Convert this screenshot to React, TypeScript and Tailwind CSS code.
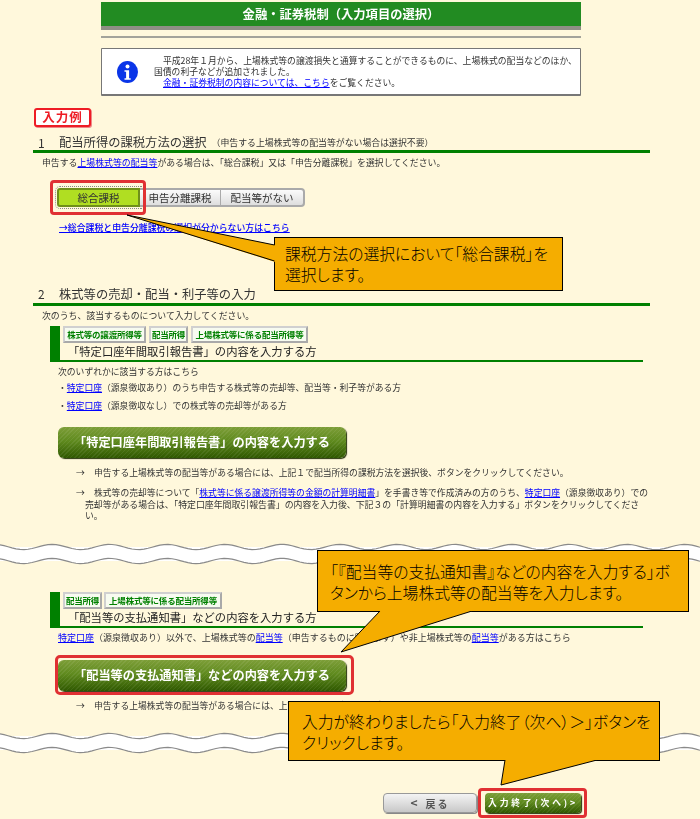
const FONT = "font-['Noto_Sans_CJK_JP','Liberation_Sans',sans-serif]";

// wave band between page fragments
function wavePath(offset: number) {
  let d = '';
  for (let x = 0; x <= 700; x += 4) {
    const y = offset + 2.6 * Math.sin(((x - 9) / 57.5) * 2 * Math.PI);
    d += `${x === 0 ? 'M' : 'L'}${x} ${y.toFixed(2)} `;
  }
  return d;
}

function Wave() {
  const top = wavePath(4);
  const bottom = wavePath(18);
  return (
    <svg className="block h-[22px] w-[700px]" viewBox="0 0 700 22" aria-hidden="true">
      <path d={`${top} L700 18 L0 18 Z`} fill="#fff" />
      <path d={`${bottom} L700 4 L0 4 Z`} fill="#fff" />
      <path d={top} fill="none" stroke="#8a8a8a" strokeWidth="1.2" />
      <path d={bottom} fill="none" stroke="#8a8a8a" strokeWidth="1.2" />
    </svg>
  );
}

function Tag({ children, className }: { children: string; className: string }) {
  return (
    <span
      className={`flex h-[17px] items-center justify-center border-2 border-[#a9a9a9] border-t-[#d0d0d0] border-l-[#d0d0d0] bg-[#f7fbf0] text-[8.5px] font-bold tracking-[-0.2px] whitespace-nowrap text-[#008000] ${className}`}
    >
      {children}
    </span>
  );
}

function GreenButton({ children }: { children: string }) {
  return (
    <div className="ml-[58px] flex h-[31px] w-[288px] items-center justify-center rounded-[6px] bg-[repeating-linear-gradient(135deg,rgba(255,255,255,0.07)_0_1px,transparent_1px_3px),linear-gradient(#7d9e38,#5f8a1e_45%,#2f5800)] text-[12.2px] font-bold whitespace-nowrap text-white shadow-[1px_1px_1px_#26330a]">
      {children}
    </div>
  );
}

function SubHead({ tags, title, gap }: { tags: { label: string; w: string }[]; title: string; gap: string }) {
  return (
    <div className="ml-[50px] h-[36px] w-[593px] border-b-2 border-l-[10px] border-[#008000]">
      <div className={`flex pl-[3px] ${gap}`}>
        {tags.map((t) => (
          <Tag key={t.label} className={t.w}>
            {t.label}
          </Tag>
        ))}
      </div>
      <div className="h-[17px] pl-[8px] text-[11.3px] leading-[17px] whitespace-nowrap text-[#222]">{title}</div>
    </div>
  );
}

function Row({ children, className = '' }: { children: React.ReactNode; className?: string }) {
  return <div className={`h-[12px] leading-[12px] whitespace-nowrap text-[#333] ${className}`}>{children}</div>;
}

function A({ children }: { children: string }) {
  return <span className="text-[#0000ff] underline">{children}</span>;
}

function Callout({
  box,
  tail,
  lines,
}: {
  box: string;
  tail: { view: string; cls: string; fill: string; edges: string };
  lines: string[];
}) {
  return (
    <>
      <div className={`absolute border border-black bg-[#f5ad00] text-[15.8px] leading-[20.5px] font-light whitespace-nowrap text-black [font-feature-settings:'palt'] ${box}`}>
        {lines.map((l) => (
          <div key={l}>{l}</div>
        ))}
      </div>
      <svg className={`absolute ${tail.cls}`} viewBox={tail.view} aria-hidden="true">
        <polygon points={tail.fill} fill="#f5ad00" />
        <polyline points={tail.edges} fill="none" stroke="#000" strokeWidth="1" />
      </svg>
    </>
  );
}

export default function App() {
  return (
    <div className={`relative h-[819px] w-[700px] overflow-hidden bg-[#fff8dc] ${FONT}`}>
      <div className="blur-[0.3px]">
        <div className="ml-[101px] w-[480px] pt-[2px]">
          <div className="flex h-[28px] items-center justify-center border-b-4 border-[#8f8f85] bg-[#228b22] text-[12.3px] font-bold text-white">
            金融・証券税制（入力項目の選択）
          </div>
          <div className="mt-[6px] h-[2px] bg-[#a3a39a]" />
          <div className="mt-[10px] flex h-[48px] items-center rounded-[1px] border border-b-2 border-[#777] bg-white">
            <svg className="ml-[15px] h-[22px] w-[21px] shrink-0" viewBox="0 0 21 22" aria-hidden="true">
              <ellipse cx="10.5" cy="11" rx="10.5" ry="11" fill="#0a35e8" />
              <circle cx="10.5" cy="5.5" r="2" fill="#fff" />
              <path d="M7.5 9.2h4.6v8h1.6v1.6H7.5v-1.6h1.6v-6.4H7.5z" fill="#fff" />
            </svg>
            <div className="ml-[16px] text-[8.8px] leading-[11px] whitespace-nowrap text-[#333]">
              <div className="pl-[9px]">平成28年１月から、上場株式等の譲渡損失と通算することができるものに、上場株式の配当などのほか、</div>
              <div>国債の利子などが追加されました。</div>
              <div className="pl-[9px]">
                <A>金融・証券税制の内容については、こちら</A>をご覧ください。
              </div>
            </div>
          </div>
        </div>

        <div className="mt-[12px] ml-[34px] flex h-[19px] w-[57px] items-center justify-center rounded-[3px] border-2 border-[#ee1c25] bg-white text-[12.5px] font-bold tracking-[1px] text-[#ee1c25] shadow-[1px_1px_0_#e88]">
          入力例
        </div>

        <div className="mt-[8px] ml-[38px] flex h-[15px] items-center whitespace-nowrap text-[#333]">
          <span className="w-[21px] text-[12px]">1</span>
          <span className="text-[12.3px]">配当所得の課税方法の選択</span>
          <span className="ml-[5px] text-[8.9px]">（申告する上場株式等の配当等がない場合は選択不要）</span>
        </div>
        <div className="ml-[33px] h-[3px] w-[617px] bg-[#008000]" />
        <Row className="mt-[4px] ml-[42px] text-[8.9px]">
          申告する<A>上場株式等の配当等</A>がある場合は、「総合課税」又は「申告分離課税」を選択してください。
        </Row>

        <div className="mt-[19px] ml-[57px] flex h-[19px] w-[248px] text-[10.5px] whitespace-nowrap text-[#333]">
          <div className="flex w-[83px] items-center justify-center rounded-l-[3px] border-2 border-[#6f8f1a] bg-[#b0de22] outline-1 outline-offset-1 outline-[#888] outline-dotted">
            総合課税
          </div>
          <div className="flex w-[81px] items-center justify-center border-y-2 border-r-1 border-[#aaa] bg-[linear-gradient(#fbfbfb,#dedede)]">
            申告分離課税
          </div>
          <div className="flex w-[84px] items-center justify-center rounded-r-[4px] border-y-2 border-r-2 border-[#aaa] bg-[linear-gradient(#fbfbfb,#dedede)]">
            配当等がない
          </div>
        </div>
        <Row className="mt-[15px] ml-[59px] text-[8.9px] font-medium">
          <A>→総合課税と申告分離課税の選択が分からない方はこちら</A>
        </Row>

        <div className="mt-[51px] ml-[38px] flex h-[18px] items-center whitespace-nowrap text-[#333]">
          <span className="w-[21px] text-[12px]">2</span>
          <span className="text-[12.3px]">株式等の売却・配当・利子等の入力</span>
        </div>
        <div className="ml-[33px] h-[3px] w-[617px] bg-[#008000]" />
        <Row className="mt-[4px] ml-[42px] text-[8.9px]">次のうち、該当するものについて入力してください。</Row>

        <div className="mt-[4px]">
          <SubHead
            gap="gap-[3px]"
            tags={[
              { label: '株式等の譲渡所得等', w: 'w-[83px]' },
              { label: '配当所得', w: 'w-[39px]' },
              { label: '上場株式等に係る配当所得等', w: 'w-[117px]' },
            ]}
            title="「特定口座年間取引報告書」の内容を入力する方"
          />
        </div>
        <Row className="mt-[4px] ml-[58px] text-[8.8px]">次のいずれかに該当する方はこちら</Row>
        <Row className="mt-[4px] ml-[58px] text-[8.8px]">
          ・<A>特定口座</A>（源泉徴収あり）のうち申告する株式等の売却等、配当等・利子等がある方
        </Row>
        <Row className="mt-[6px] ml-[58px] text-[8.8px]">
          ・<A>特定口座</A>（源泉徴収なし）での株式等の売却等がある方
        </Row>

        <div className="mt-[15px]">
          <GreenButton>「特定口座年間取引報告書」の内容を入力する</GreenButton>
        </div>

        <Row className="mt-[9px] ml-[76px] text-[8.8px]">
          <span className="inline-block w-[18px]">→</span>申告する上場株式等の配当等がある場合には、上記１で配当所得の課税方法を選択後、ボタンをクリックしてください。
        </Row>
        <div className="mt-[8px] ml-[76px] h-[35px] text-[8.8px] leading-[11.6px] whitespace-nowrap text-[#333]">
          <div>
            <span className="inline-block w-[18px]">→</span>株式等の売却等について「<A>株式等に係る譲渡所得等の金額の計算明細書</A>」を手書き等で作成済みの方のうち、<A>特定口座</A>（源泉徴収あり）での
          </div>
          <div className="pl-[9px] text-[8.9px]">売却等がある場合は、「特定口座年間取引報告書」の内容を入力後、下記３の「計算明細書の内容を入力する」ボタンをクリックしてくださ</div>
          <div className="pl-[9px]">い。</div>
        </div>

        <div className="mt-[21px]">
          <Wave />
        </div>

        <div className="mt-[27px]">
          <SubHead
            gap="gap-[2px]"
            tags={[
              { label: '配当所得', w: 'w-[39px]' },
              { label: '上場株式等に係る配当所得等', w: 'w-[118px]' },
            ]}
            title="「配当等の支払通知書」などの内容を入力する方"
          />
        </div>
        <Row className="mt-[4px] ml-[58px] text-[9px]">
          <A>特定口座</A>（源泉徴収あり）以外で、上場株式等の<A>配当等</A>（申告するものに限ります）や非上場株式等の<A>配当等</A>がある方はこちら
        </Row>
        <div className="mt-[16px]">
          <GreenButton>「配当等の支払通知書」などの内容を入力する</GreenButton>
        </div>
        <Row className="mt-[9px] ml-[76px] text-[8.8px]">
          <span className="inline-block w-[18px]">→</span>申告する上場株式等の配当等がある場合には、上記１で配当所得の課税方法を選択後
        </Row>
        <div className="mt-[20px]">
          <Wave />
        </div>

        <div className="mt-[39px] ml-[383px] flex h-[20px] gap-[8px] whitespace-nowrap">
          <div className="flex w-[94px] items-center justify-center gap-[8px] rounded-[4px] border border-[#999] bg-[linear-gradient(#f4f4f4,#c8c8c8)] text-[10px] font-bold text-[#555] shadow-[1px_1px_0_#888]">
            <span className="text-[12px]">&lt;</span>
            <span className="tracking-[2px]">戻る</span>
          </div>
          <div className="flex w-[96px] items-center justify-center rounded-[4px] bg-[repeating-linear-gradient(135deg,rgba(255,255,255,0.07)_0_1px,transparent_1px_3px),linear-gradient(#7d9e38,#5f8a1e_45%,#2f5800)] text-[8.8px] font-bold tracking-[2.8px] text-white shadow-[1px_1px_1px_#26330a]">
            入力終了(次へ)&gt;
          </div>
        </div>
      </div>

      {/* red highlight frames */}
      <div className="absolute top-[180px] left-[50px] h-[35px] w-[96px] rounded-[4px] border-[3px] border-[#e03033]" />
      <div className="absolute top-[655px] left-[55px] h-[40px] w-[299px] rounded-[5px] border-[3px] border-[#e03033]" />
      <div className="absolute top-[788px] left-[478px] h-[30px] w-[109px] rounded-[4px] border-[3px] border-[#e03033]" />

      {/* callouts */}
      <Callout
        box="top-[237px] left-[274px] h-[54px] w-[289px] pt-[6px] pl-[10px]"
        tail={{
          view: '0 0 150 50',
          cls: 'top-[214px] left-[125px] h-[50px] w-[150px]',
          fill: '2,1 150,31 150,48',
          edges: '149.5,31 2,1 149.5,47',
        }}
        lines={['課税方法の選択において「総合課税」を', '選択します。']}
      />
      <Callout
        box="top-[550px] left-[317px] h-[62px] w-[372px] pt-[11px] pl-[12px]"
        tail={{
          view: '0 0 135 42',
          cls: 'top-[611px] left-[340px] h-[42px] w-[135px]',
          fill: '1,41 40,0 132,0',
          edges: '40,0 1,41 132,0',
        }}
        lines={['「『配当等の支払通知書』などの内容を入力する」ボ', 'タンから上場株式等の配当等を入力します。']}
      />
      <Callout
        box="top-[701px] left-[288px] h-[60px] w-[372px] pt-[10px] pl-[13px]"
        tail={{
          view: '0 0 100 26',
          cls: 'top-[760px] left-[500px] h-[26px] w-[100px]',
          fill: '1,25 5,0 97,0',
          edges: '5,0 1,25 97,0',
        }}
        lines={['入力が終わりましたら「入力終了（次へ）＞」ボタンを', 'クリックします。']}
      />
    </div>
  );
}
